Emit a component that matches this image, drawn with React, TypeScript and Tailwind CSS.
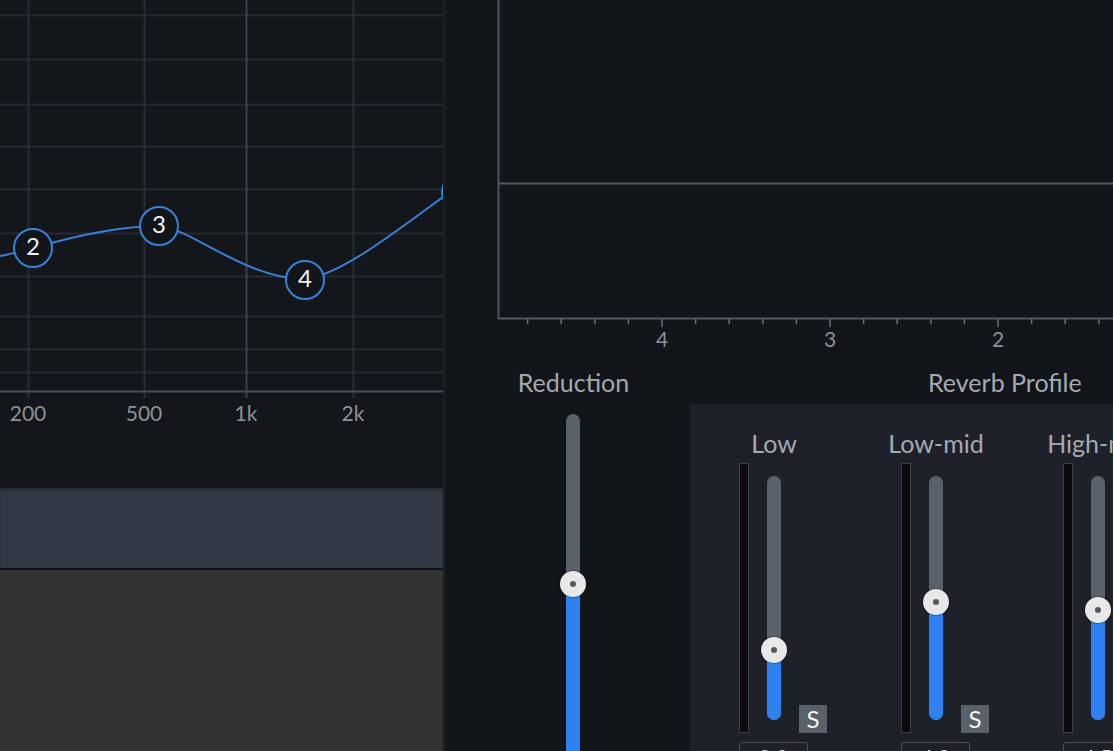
import React from "react";

const font = { fontFamily: "Lato, 'Noto Sans', sans-serif" };

const hLines = [15, 59, 104, 146, 189, 233, 276, 316, 349, 372];
const vLines = [
  { x: 28, label: "200", strong: false },
  { x: 144, label: "500", strong: false },
  { x: 246, label: "1k", strong: true },
  { x: 353, label: "2k", strong: false },
];
const nodes = [
  { x: 33, y: 248, n: "2" },
  { x: 159, y: 226, n: "3" },
  { x: 305, y: 280, n: "4" },
];

function EqGraph() {
  return (
    <svg width={443} height={440} className="block shrink-0">
      {hLines.map((y) => (
        <line key={y} x1={0} x2={443} y1={y + 0.5} y2={y + 0.5} stroke="#272b31" strokeWidth={2} />
      ))}
      {vLines.map((v) => (
        <line
          key={v.x}
          x1={v.x + 0.5}
          x2={v.x + 0.5}
          y1={0}
          y2={398}
          stroke={v.strong ? "#3c4148" : "#2a2e34"}
          strokeWidth={2}
        />
      ))}
      <line x1={0} x2={443} y1={391.5} y2={391.5} stroke="#4a4f56" strokeWidth={2} />
      <path
        d="M0,256 C12,254 22,251 33,248 C75,236 120,226 159,226 C195,230 240,276 305,280 C345,272 395,232 443,197"
        fill="none"
        stroke="#3b80d8"
        strokeWidth={2}
      />
      {/* band 5 handle, mostly off the edge */}
      <circle cx={461} cy={192} r={19} fill="#12151a" stroke="#3b80d8" strokeWidth={2} />
      {nodes.map((p) => (
        <g key={p.n}>
          <circle cx={p.x} cy={p.y} r={19} fill="#12151a" stroke="#3b80d8" strokeWidth={2} />
          <text
            x={p.x}
            y={p.y + 1}
            textAnchor="middle"
            dominantBaseline="middle"
            fill="#f2f2f2"
            fontSize={24}
            style={font}
          >
            {p.n}
          </text>
        </g>
      ))}
      {vLines.map((v) => (
        <text
          key={v.label}
          x={v.x}
          y={416}
          textAnchor="middle"
          dominantBaseline="middle"
          fill="#8b9299"
          fontSize={21}
          style={font}
        >
          {v.label}
        </text>
      ))}
    </svg>
  );
}

function DecayGraph() {
  const ticks: { x: number; major: boolean }[] = [];
  const majors = [
    { x: 217, label: "4" },
    { x: 385, label: "3" },
    { x: 553, label: "2" },
  ];
  for (let k = -4; k < 20; k++) {
    const x = 217 + k * 33.6;
    if (x < 60 || x > 668) continue;
    const m = majors.find((mm) => Math.abs(mm.x - x) < 1);
    ticks.push({ x, major: !!m });
  }
  return (
    <svg width={668} height={360} className="block shrink-0">
      <line x1={53.5} x2={53.5} y1={0} y2={319} stroke="#4f545b" strokeWidth={2} />
      <line x1={53} x2={668} y1={183.5} y2={183.5} stroke="#555a61" strokeWidth={2} />
      <line x1={53} x2={668} y1={318.5} y2={318.5} stroke="#555a61" strokeWidth={2} />
      {ticks.map((t) => (
        <line
          key={t.x}
          x1={t.x}
          x2={t.x}
          y1={319}
          y2={t.major ? 327 : 324}
          stroke="#6a7077"
          strokeWidth={1.5}
        />
      ))}
      {majors.map((m) => (
        <text
          key={m.label}
          x={m.x}
          y={342}
          textAnchor="middle"
          dominantBaseline="middle"
          fill="#8b9299"
          fontSize={21}
          style={font}
        >
          {m.label}
        </text>
      ))}
    </svg>
  );
}

function Knob() {
  return (
    <div className="flex h-[26px] w-[26px] items-center justify-center rounded-full bg-[#e8e8e8] shadow-[0_0_0_1px_rgba(0,0,0,0.25)]">
      <div className="h-[6px] w-[6px] rounded-full bg-[#55585d]" />
    </div>
  );
}

const bands = [
  { name: "Low", pos: 70, value: "0.0" },
  { name: "Low-mid", pos: 118, value: "4.0" },
  { name: "High-mid", pos: 110, value: "4.5" },
  { name: "High", pos: 100, value: "3.0" },
];

function BandColumn({ name, pos, value }: { name: string; pos: number; value: string }) {
  return (
    <div className="flex w-[162px] shrink-0 flex-col">
      <div className="flex w-[70px] justify-center whitespace-nowrap text-[25px] leading-[30px] text-[#a4aab1]">
        {name}
      </div>
      <div className="mt-[5px] flex items-start">
        <div className="h-[270px] w-[10px] border border-[#3b3e43] bg-[#0a0a0b]" />
        <div className="relative ml-[18px] mt-[13px] h-[244px] w-[14px] rounded-full bg-[#59616b]">
          <div
            className="absolute bottom-0 left-0 right-0 rounded-full bg-[#2f81f2]"
            style={{ height: pos }}
          />
          <div
            className="absolute left-1/2 -translate-x-1/2 translate-y-1/2"
            style={{ bottom: pos }}
          >
            <Knob />
          </div>
        </div>
        <div className="ml-[18px] mt-[242px] flex h-[28px] w-[28px] items-center justify-center bg-[#5b6169] text-[24px] leading-none text-[#f4f4f4]">
          S
        </div>
      </div>
      <div className="mt-[9px] flex h-[30px] w-[69px] items-center justify-center rounded-[3px] border border-[#4a4e55] text-[21px] text-[#d6d8db]">
        {value}
      </div>
    </div>
  );
}

export default function App() {
  return (
    <div className="flex h-[751px] w-[1113px] overflow-hidden bg-[#121519]" style={font}>
      {/* left: EQ */}
      <div className="flex w-[445px] shrink-0 flex-col border-r-2 border-[#1c1f24] bg-[#13161a]">
        <EqGraph />
        <div className="h-[48px] shrink-0" />
        <div className="h-[80px] shrink-0 bg-[#323843] shadow-[inset_0_2px_2px_rgba(0,0,0,0.25)]" />
        <div className="h-[2px] shrink-0 bg-[#0e1013]" />
        <div className="flex-1 bg-[#333333]" />
      </div>

      {/* right: decay + controls */}
      <div className="flex min-w-0 flex-1 flex-col overflow-hidden">
        <DecayGraph />
        <div className="flex shrink-0">
          <div className="flex w-[245px] shrink-0 flex-col pl-[72px] pt-[7px]">
            <div className="flex w-[113px] justify-center whitespace-nowrap text-[25px] leading-[30px] text-[#a4aab1]">
              Reduction
            </div>
            <div className="relative ml-[49px] mt-[17px] h-[400px] w-[14px] rounded-t-full bg-[#59616b]">
              <div className="absolute bottom-0 left-0 right-0 h-[230px] bg-[#2f81f2]" />
              <div className="absolute left-1/2 top-[170px] -translate-x-1/2 -translate-y-1/2">
                <Knob />
              </div>
            </div>
          </div>
          <div className="flex min-w-0 flex-1 flex-col pt-[7px]">
            <div className="whitespace-nowrap pl-[238px] text-[25px] leading-[30px] text-[#a4aab1]">
              Reverb Profile
            </div>
            <div className="mt-[7px] flex h-[400px] bg-[#1e2129] pl-[49px] pt-[24px]">
              {bands.map((b) => (
                <BandColumn key={b.name} {...b} />
              ))}
            </div>
          </div>
        </div>
      </div>
    </div>
  );
}
